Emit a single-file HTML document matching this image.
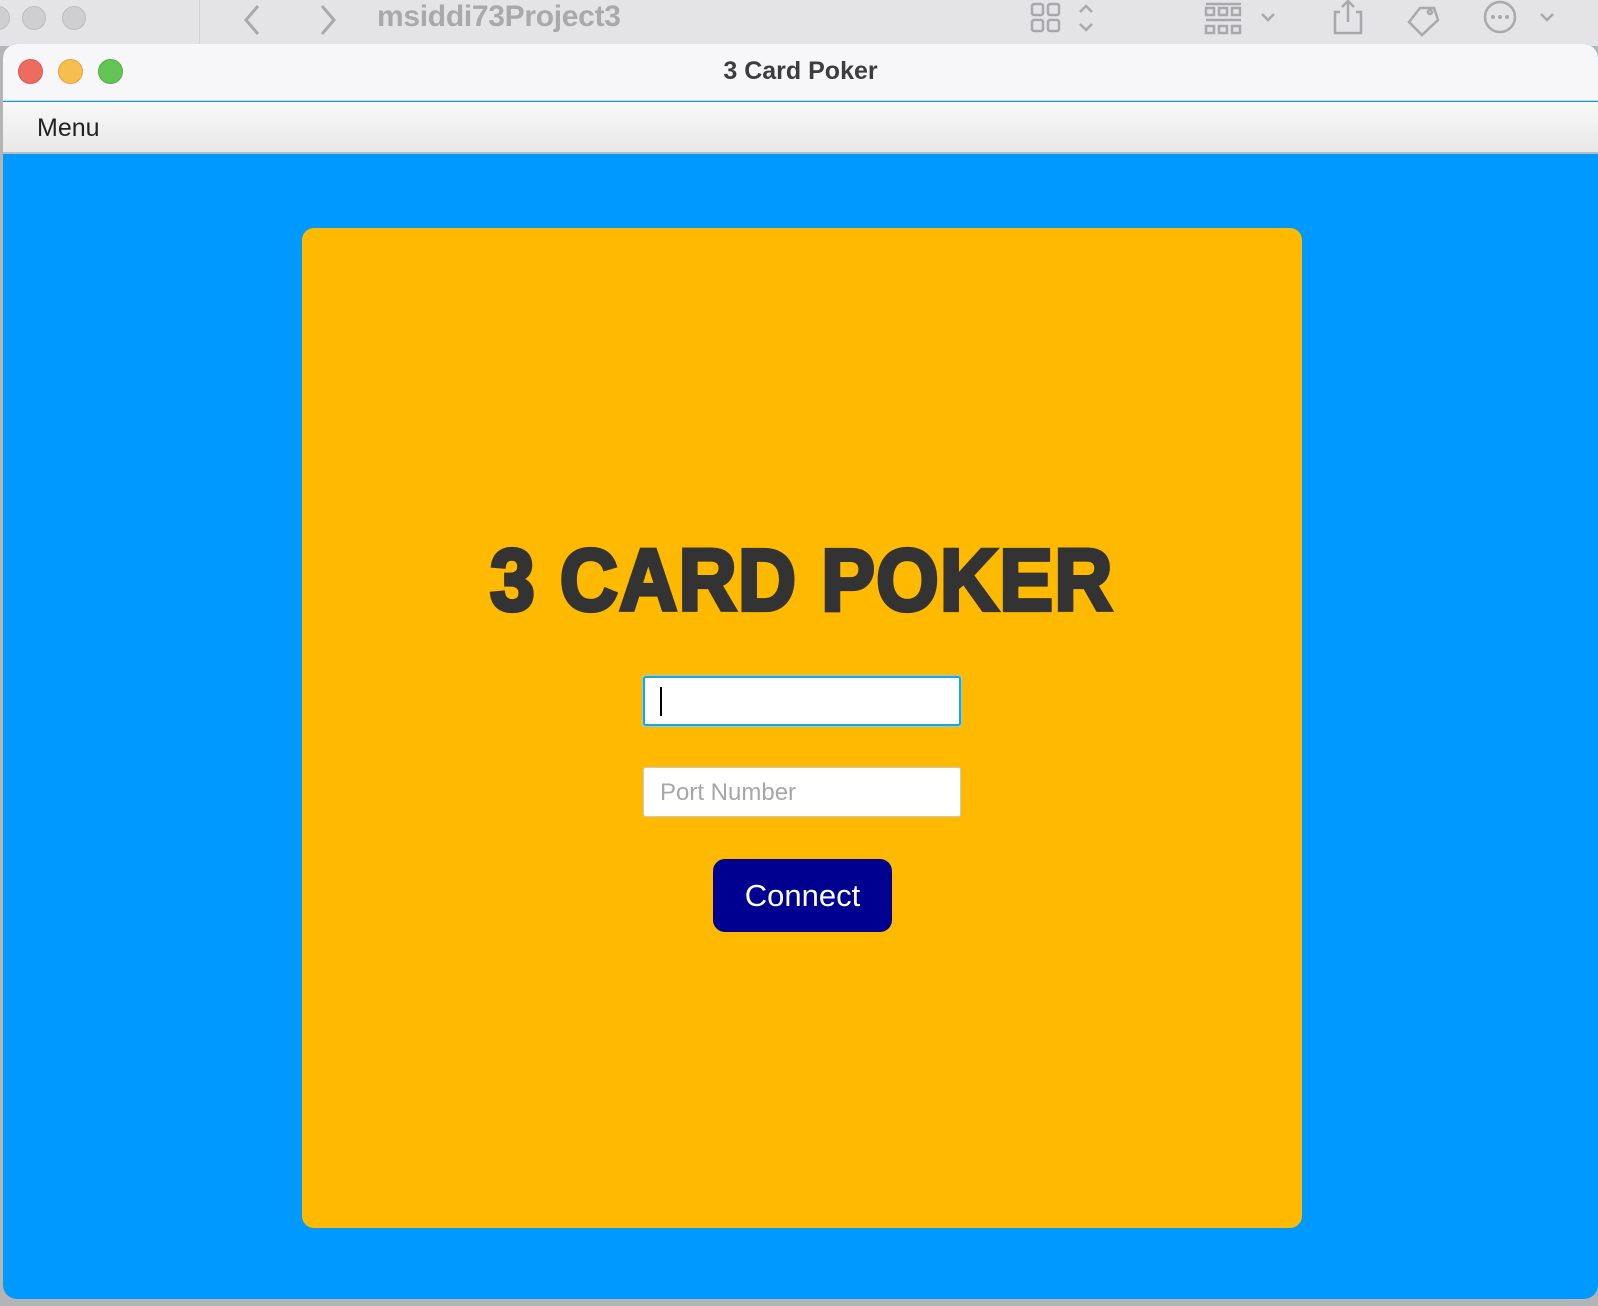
<!DOCTYPE html>
<html><head><meta charset="utf-8"><style>
*{margin:0;padding:0;box-sizing:border-box}
body{width:1598px;height:1306px;overflow:hidden;background:#b4b4b4;font-family:"Liberation Sans",sans-serif;position:relative}
.top{position:absolute;left:0;top:0;width:1598px;height:46px;background:#e4e3e6}
.top .sep{position:absolute;left:199px;top:0;width:1px;height:46px;background:#d3d2d5}
.gc{position:absolute;top:6px;width:24px;height:24px;border-radius:50%;background:#cfced1;border:1px solid #bdbcbf}
.ptitle{position:absolute;left:377px;top:0px;font-size:30px;font-weight:bold;color:#a9a8ab;letter-spacing:-0.3px}
.win{position:absolute;left:3px;top:44px;width:1595px;height:1255px;border-radius:14px;overflow:hidden;background:#0099ff}
.tb{position:absolute;left:0;top:0;width:100%;height:57px;background:#f7f6f9;border-bottom:1px solid #d8d7da}
.light{position:absolute;top:15px;width:25px;height:25px;border-radius:50%}
.wt{position:absolute;left:0;width:100%;top:13px;text-align:center;font-size:25px;font-weight:bold;color:#3d3d3d}
.mb{position:absolute;left:0;top:58px;width:100%;height:52px;background:linear-gradient(#f8f8f8,#e8e8e8);border-bottom:2px solid #bcbcbc}
.mb span{position:absolute;left:34px;top:12px;font-size:25px;color:#222}
.card{position:absolute;left:299px;top:184px;width:1000px;height:1000px;background:#ffba00;border-radius:12px}
.logo{position:absolute;left:0;width:100%;top:309px;text-align:center;font-size:100px;font-weight:bold;color:#333;-webkit-text-stroke:5px #333;transform:scale(0.8,0.87);transform-origin:50% 0;letter-spacing:2px;line-height:100px}
.in{position:absolute;left:341px;width:318px;height:50px;background:#fff;border-radius:3px}
.b{position:absolute;left:411px;top:631px;width:179px;height:73px;border-radius:12px;background:#000090;color:#fff;font-size:31px;text-align:center;line-height:73px}
</style></head><body>
<div class="top">
<div class="gc" style="left:-14px"></div><div class="gc" style="left:22px"></div><div class="gc" style="left:62px"></div>
<div class="sep"></div>
<svg style="position:absolute;left:240px;top:4px" width="100" height="32" fill="none" stroke="#a9a8ab" stroke-width="3"><path d="M18 2 L6 16 L18 30"/><path d="M82 2 L94 16 L82 30"/></svg>
<div class="ptitle">msiddi73Project3</div>
<svg style="position:absolute;left:1025px;top:0" width="560" height="40" fill="none" stroke="#a9a8ab" stroke-width="2.5">
<rect x="7" y="4" width="11" height="11" rx="2"/><rect x="23" y="4" width="11" height="11" rx="2"/><rect x="7" y="20" width="11" height="11" rx="2"/><rect x="23" y="20" width="11" height="11" rx="2"/>
<path d="M55 12l6-6 6 6M55 24l6 6 6-6"/>
<path d="M181 4h35M181 20h35"/><rect x="181" y="8" width="8" height="7"/><rect x="194" y="8" width="8" height="7"/><rect x="207" y="8" width="8" height="7"/><rect x="181" y="26" width="8" height="7"/><rect x="194" y="26" width="8" height="7"/><rect x="207" y="26" width="8" height="7"/>
<path d="M237 14l6 6 6-6"/>
<path d="M315 12h-5v21h26v-21h-5M323 22v-21M317 7l6-6 6 6"/>
<path d="M395 8l14 0 4 12-16 15-13-13z"/><circle cx="405" cy="12" r="2"/>
<circle cx="475" cy="17" r="15"/><path d="M516 14l6 6 6-6"/>
</svg>
<svg style="position:absolute;left:1489px;top:14px" width="22" height="6" fill="#a9a8ab"><circle cx="4" cy="3" r="2"/><circle cx="11" cy="3" r="2"/><circle cx="18" cy="3" r="2"/></svg>
</div>
<div class="win">
<div class="tb">
<div class="light" style="left:15px;background:#ee6b60;border:1px solid #d95a50"></div>
<div class="light" style="left:55px;background:#f5be4f;border:1px solid #dea63e"></div>
<div class="light" style="left:95px;background:#62c554;border:1px solid #52ae46"></div>
<div class="wt">3 Card Poker</div>
</div>
<div class="mb"><span>Menu</span></div>
<div class="card">
<div class="logo">3 CARD POKER</div>
<div class="in" style="top:448px;border:2.5px solid #1da6de;box-shadow:0 0 0 1px #7fd0f0"><div style="position:absolute;left:15px;top:9px;width:2px;height:29px;background:#000"></div></div>
<div class="in" style="top:539px;border:1px solid #c8c8c8"><span style="position:absolute;left:16px;top:11px;font-size:24px;color:#a7a7a7">Port Number</span></div>
<div class="b">Connect</div>
</div>
</div>
</body></html>
